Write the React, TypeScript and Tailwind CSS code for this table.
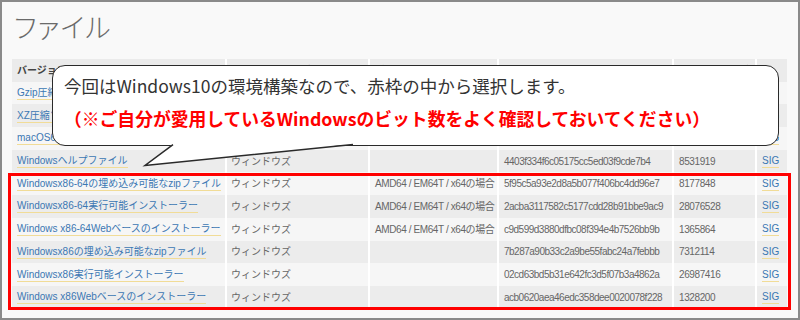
import React from "react";

type Row = {
  name: string;
  os: string;
  desc: string;
  md5: string;
  size: string;
};

const rows: Row[] = [
  { name: "Gzip圧縮ソースtarball", os: "ソースリリース", desc: "", md5: "e18a9d1a0a6d858b9787e03fc6fdaa20", size: "22942015" },
  { name: "XZ圧縮ソースtarball", os: "ソースリリース", desc: "", md5: "0ba2e9ca29b719da6e0b81f7f33f08f6", size: "17042320" },
  { name: "macOS64ビットインストーラー", os: "Mac OS X", desc: "OS X 10.9以降の場合", md5: "8b0f6e8e1a2d4c7fb3aa7f9ac6c6b0a2", size: "29835848" },
  { name: "Windowsヘルプファイル", os: "ウィンドウズ", desc: "", md5: "4403f334f6c05175cc5ed03f9cde7b4", size: "8531919" },
  { name: "Windowsx86-64の埋め込み可能なzipファイル", os: "ウィンドウズ", desc: "AMD64 / EM64T / x64の場合", md5: "5f95c5a93e2d8a5b077f406bc4dd96e7", size: "8177848" },
  { name: "Windowsx86-64実行可能インストーラー", os: "ウィンドウズ", desc: "AMD64 / EM64T / x64の場合", md5: "2acba3117582c5177cdd28b91bbe9ac9", size: "28076528" },
  { name: "Windows x86-64Webベースのインストーラー", os: "ウィンドウズ", desc: "AMD64 / EM64T / x64の場合", md5: "c9d599d3880dfbc08f394e4b7526bb9b", size: "1365864" },
  { name: "Windowsx86の埋め込み可能なzipファイル", os: "ウィンドウズ", desc: "", md5: "7b287a90b33c2a9be55fabc24a7febbb", size: "7312114" },
  { name: "Windowsx86実行可能インストーラー", os: "ウィンドウズ", desc: "", md5: "02cd63bd5b31e642fc3d5f07b3a4862a", size: "26987416" },
  { name: "Windows x86Webベースのインストーラー", os: "ウィンドウズ", desc: "", md5: "acb0620aea46edc358dee0020078f228", size: "1328200" },
];

const cell = "flex items-center h-full overflow-hidden whitespace-nowrap";

export default function App() {
  return (
    <div
      className="relative w-[800px] h-[320px] overflow-hidden border-2 border-[#8a8a8a] bg-[#f9f9f9]"
      style={{ fontFamily: '"Liberation Sans", "Noto Sans CJK JP", sans-serif' }}
    >
      {/* Title */}
      <div className="h-[57px] pl-[12px] pt-[7px]">
        <h1
          className="text-[27px] leading-[36px] font-light text-[#6a6a6a] [font-feature-settings:'palt'] tracking-[1px]"
          style={{ fontFamily: '"Noto Sans CJK JP", sans-serif' }}
        >
          ファイル
        </h1>
      </div>

      {/* Table */}
      <div className="ml-[10px] w-[775px] bg-white text-[10px] text-[#666]">
        <div className="flex h-[22.7px] gap-[2px] bg-white font-bold text-[#444]">
          <div className={`${cell} w-[213px] pl-[5px] bg-[#ebebeb]`}>バージョン</div>
          <div className={`${cell} w-[141px] pl-[4px] bg-[#ebebeb]`}>オペレーティングシステム</div>
          <div className={`${cell} w-[127px] pl-[5px] bg-[#ebebeb]`}>説明</div>
          <div className={`${cell} w-[173px] pl-[5px] bg-[#ebebeb]`}>MD5 Sum</div>
          <div className={`${cell} w-[81px] pl-[5px] bg-[#ebebeb]`}>ファイルサイズ</div>
          <div className={`${cell} w-[30px] pl-[5px] bg-[#ebebeb]`}></div>
        </div>
        {rows.map((r, i) => {
          const bg = i % 2 === 0 ? "bg-[#f6f6f6]" : "bg-[#ececec]";
          return (
            <div key={i} className="flex h-[22.7px] gap-[2px] bg-white">
              <div className={`${cell} w-[213px] pl-[5px] ${bg}`}>
                <span className="text-[#3b77b3] leading-[13px] border-b border-[#f1dc97]">{r.name}</span>
              </div>
              <div className={`${cell} w-[141px] pl-[4px] ${bg}`}>{r.os}</div>
              <div className={`${cell} w-[127px] pl-[5px] tracking-[-0.4px] ${bg}`}>{r.desc}</div>
              <div className={`${cell} w-[173px] pl-[5px] tracking-[-0.5px] ${bg}`}>{r.md5}</div>
              <div className={`${cell} w-[81px] pl-[5px] tracking-[-0.4px] ${bg}`}>{r.size}</div>
              <div className={`${cell} w-[30px] pl-[5px] ${bg}`}>
                <span className="text-[#3b77b3] leading-[13px] border-b border-[#f1dc97]">SIG</span>
              </div>
            </div>
          );
        })}
      </div>

      {/* Red highlight frame */}
      <div className="absolute left-[6px] top-[171px] w-[783px] h-[137px] border-[3px] border-[#ff0000]" />

      {/* Callout bubble */}
      <div
        className="absolute left-[50px] top-[63px] w-[727px] h-[81px] rounded-[13px] border-[1.5px] border-[#2a2a2a] bg-white pl-[11px] pt-[3px] leading-[33px]"
        style={{ fontFamily: '"Noto Sans CJK JP", sans-serif' }}
      >
        <div className="text-[17.5px] text-[#333]">今回はWindows10の環境構築なので、赤枠の中から選択します。</div>
        <div className="text-[17.8px] font-bold text-[#ff0000]">（※ご自分が愛用しているWindowsのビット数をよく確認しておいてください）</div>
      </div>
      <svg className="absolute left-0 top-0" width="800" height="320" viewBox="0 0 800 320">
        <polygon points="171,142 143,163.5 351,142" fill="#ffffff" />
        <polyline points="171,142.6 143,163.5 351,142.6" fill="none" stroke="#2a2a2a" strokeWidth="1.5" strokeLinejoin="miter" />
      </svg>
    </div>
  );
}
